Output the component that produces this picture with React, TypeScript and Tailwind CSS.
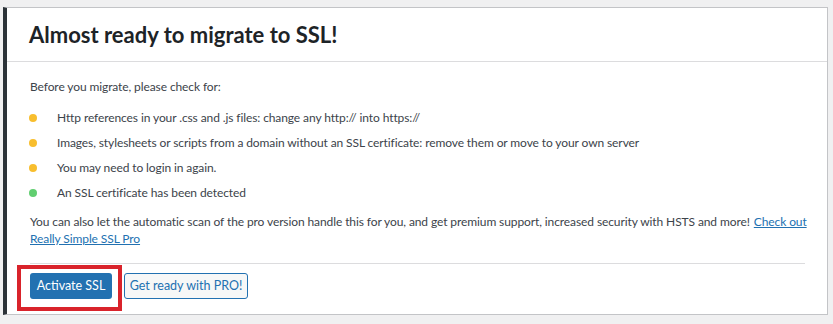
import React from "react";

const items: { text: string; color: string }[] = [
  { text: "Http references in your .css and .js files: change any http:// into https://", color: "bg-[#f8be2e]" },
  { text: "Images, stylesheets or scripts from a domain without an SSL certificate: remove them or move to your own server", color: "bg-[#f8be2e]" },
  { text: "You may need to login in again.", color: "bg-[#f8be2e]" },
  { text: "An SSL certificate has been detected", color: "bg-[#61ce70]" },
];

export default function App() {
  return (
    <div className="w-[833px] h-[324px] bg-[#f0f0f1] pt-[7px] pl-[3px] pr-[5px] pb-[9px] font-['Lato',sans-serif]">
      <div className="relative h-full bg-white border border-[#c3c4c7] border-l-4 border-l-[#2c3338] flex flex-col">
        <div className="h-[54px] border-b border-[#dcdcde] pl-[22px] flex items-center">
          <h2 className="text-[22px] font-bold text-[#1d2327] leading-none">Almost ready to migrate to SSL!</h2>
        </div>
        <div className="pl-[23px] pr-[16px] pt-[15px] text-[12px] tracking-[-0.1px] text-[#3c434a]">
          <p className="h-[20px] leading-[20px]">Before you migrate, please check for:</p>
          <ul className="mt-[8px]">
            {items.map((it) => (
              <li key={it.text} className="h-[25px] flex items-center">
                <span className={`w-[8px] h-[8px] rounded-full ml-[-1px] mr-[18px] ${it.color}`} />
                <span className="ml-[2px]">{it.text}</span>
              </li>
            ))}
          </ul>
          <div className="mt-[8px] leading-[17px]">
            <div className="flex justify-between">
              <span>You can also let the automatic scan of the pro version handle this for you, and get premium support, increased security with HSTS and more!</span>
              <a href="#" className="text-[#2271b1] underline ml-[4px] mr-auto">Check out</a>
            </div>
            <a href="#" className="block w-fit text-[#2271b1] underline">Really Simple SSL Pro</a>
          </div>
          <div className="mt-[16px] border-t border-[#dcdcde] mr-[6px]" />
          <div className="mt-[9px] flex gap-[12px] tracking-normal">
            <button className="h-[26px] w-[82px] rounded-[3px] bg-[#2271b1] text-white text-[12.5px] leading-none">Activate SSL</button>
            <button className="h-[26px] w-[124px] rounded-[3px] border border-[#2271b1] bg-[#f6f7f7] text-[#2271b1] text-[12.5px] leading-none">Get ready with PRO!</button>
          </div>
        </div>
        <div className="absolute left-[10px] top-[257px] w-[105px] h-[46px] border-4 border-[#d9232b]" />
      </div>
    </div>
  );
}
